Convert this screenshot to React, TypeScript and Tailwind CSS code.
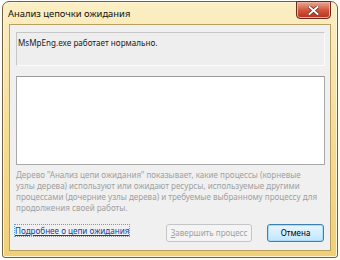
import React from "react";

const font = { fontFamily: '"Noto Sans", "Open Sans", Arial, sans-serif' };

export default function App() {
  return (
    <div className="w-[340px] h-[260px] bg-white overflow-hidden" style={font}>
      <div className="ml-[2px] mt-[1px] w-[336px] h-[257px] rounded-t-[7px] rounded-b-[3px] border border-[#6f6040] bg-gradient-to-b from-[#fbefc4] via-[#f5dd95] to-[#f0cf78] flex flex-col shadow-[inset_0_0_0_1px_#fff6d8]">
        {/* title bar */}
        <div className="h-[22px] flex items-start justify-between pl-[5px] pr-[5px]">
          <div className="mt-[5px] text-[9.4px] leading-[13px] text-[#111] whitespace-nowrap">
            Анализ цепочки ожидания
          </div>
          <div className="w-[35px] h-[18px] -mt-[1px] mr-[1px] rounded-b-[4px] border border-[#6a2a1e] bg-gradient-to-b from-[#e9a793] via-[#d3573e] to-[#b82e18] flex items-center justify-center shadow-[inset_0_0_0_1px_#f0b0a0]">
            <svg width="11" height="9" viewBox="0 0 11 9">
              <path d="M1.5 1 L9.5 8 M9.5 1 L1.5 8" stroke="#5a1a10" strokeWidth="3.2" strokeLinecap="square" />
              <path d="M1.5 1 L9.5 8 M9.5 1 L1.5 8" stroke="#ffffff" strokeWidth="2" strokeLinecap="square" />
            </svg>
          </div>
        </div>
        {/* client */}
        <div className="mx-[6px] mb-[6px] flex-1 border border-[#b9a061] bg-[#f0f0f0] flex flex-col pl-[6px] pr-[5px] pt-[7px]">
          <div className="h-[34px] border-t border-l border-[#c6c6c6] border-b border-r border-b-[#fbfbfb] border-r-[#fbfbfb] bg-[#eeeeee] pl-[1px] pt-[4px] text-[8.1px] leading-[11px] text-[#222] whitespace-nowrap">
            MsMpEng.exe работает нормально.
          </div>
          <div className="mt-[10px] h-[89px] border border-[#a9a9a9] border-t-[#9a9a9a] bg-white" />
          <div className="mt-[4px] text-[8.05px] leading-[11px] text-[#a0a0a0] whitespace-nowrap">
            Дерево "Анализ цепи ожидания" показывает, какие процессы (корневые
            <br />
            узлы дерева) используют или ожидают ресурсы, используемые другими
            <br />
            процессами (дочерние узлы дерева) и требуемые выбранному процессу для
            <br />
            продолжения своей работы.
          </div>
          <div className="mt-[11px] flex items-start justify-between">
            <span className="mt-[1px] text-[8.1px] leading-[11px] text-[#0645ad] underline outline outline-1 outline-dotted outline-[#6aa0d0] -ml-[1px] whitespace-nowrap">
              Подробнее о цепи ожидания
            </span>
            <div className="flex items-center gap-[15px] mr-[1px]">
              <div className="w-[86px] h-[18px] rounded-[3px] border border-[#c5c5c5] bg-[#f4f4f4] flex items-center justify-center text-[8px] text-[#a0a0a0] whitespace-nowrap">
                <span><span className="underline">З</span>авершить процесс</span>
              </div>
              <div className="w-[57px] h-[18px] rounded-[3px] border border-[#3c7fb1] bg-gradient-to-b from-[#eaf6fd] to-[#bee6fd] shadow-[inset_0_0_0_1px_#a8dcf8] flex items-center justify-center text-[8px] text-black whitespace-nowrap">
                Отмена
              </div>
            </div>
          </div>
        </div>
      </div>
    </div>
  );
}
